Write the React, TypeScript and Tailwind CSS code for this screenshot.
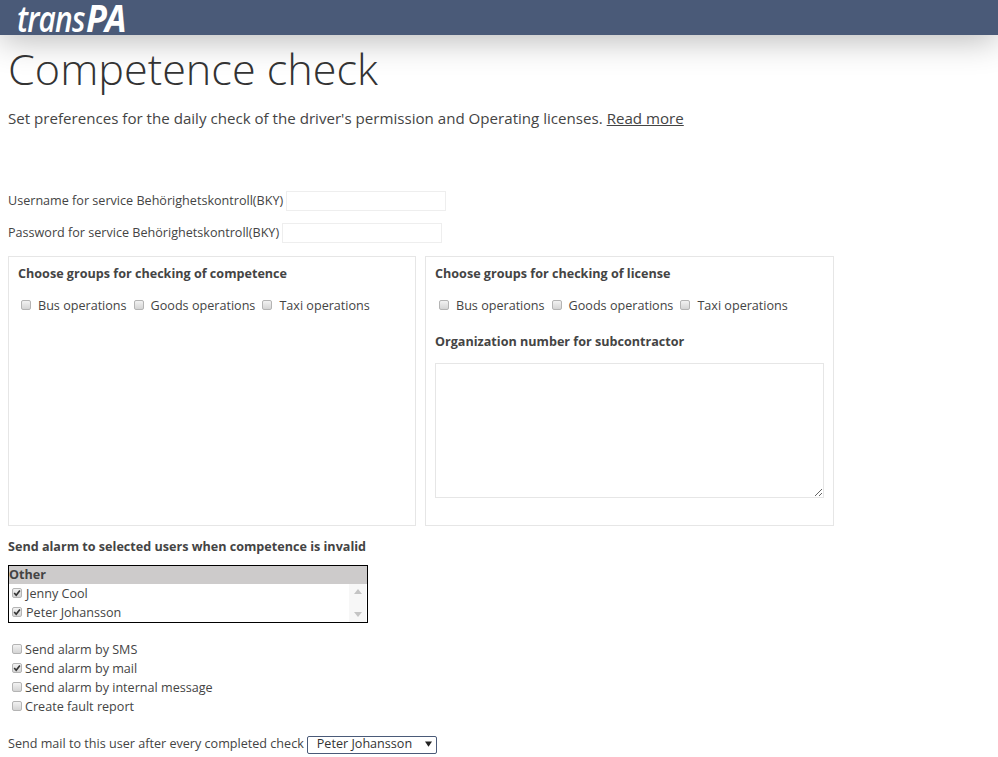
import React from 'react';

const Check = ({ checked = false }: { checked?: boolean }) => (
  <span className="relative inline-block w-[10px] h-[10px] shrink-0">
    <input
      type="checkbox"
      readOnly
      checked={checked}
      className="block appearance-none w-[10px] h-[10px] rounded-[2px] border border-[#b4b4b4] bg-gradient-to-b from-[#f2f2f2] to-[#d4d4d4]"
    />
    {checked && (
      <svg viewBox="0 0 10 10" className="absolute left-0 top-0 w-[10px] h-[10px]">
        <path d="M2.2 5 L4.2 7.2 L7.9 2.4" fill="none" stroke="#333" strokeWidth="1.7" />
      </svg>
    )}
  </span>
);

const GroupChecks = () => (
  <div className="flex items-center h-[18px] pl-[2px]">
    <span className="-mt-[3px] flex"><Check /></span>
    <span className="ml-[7px]">Bus operations</span>
    <span className="ml-[7px] -mt-[3px] flex"><Check /></span>
    <span className="ml-[7px]">Goods operations</span>
    <span className="ml-[7px] -mt-[3px] flex"><Check /></span>
    <span className="ml-[7px]">Taxi operations</span>
  </div>
);

const AlarmRow = ({ label, checked }: { label: string; checked?: boolean }) => (
  <div className="flex items-center h-[19px] pl-[4px] gap-[3px]">
    <span className="-mt-[3px] flex"><Check checked={checked} /></span>
    <span>{label}</span>
  </div>
);

export default function App() {
  return (
    <div className="h-[757px] overflow-hidden bg-white text-[#444] text-[12.6px] font-['Open_Sans',sans-serif]">
      {/* Header */}
      <header className="h-[35px] bg-[#4a5a78] shadow-[0_4px_34px_rgba(0,0,0,0.3)] pl-[17px] flex items-baseline text-white italic">
        <span className="text-[36px] font-semibold tracking-[-1px] leading-[35px] scale-x-[0.83] origin-left -mr-[14px]">trans</span>
        <span className="ml-[2px] text-[38px] font-bold tracking-[-2px] leading-[35px] scale-x-[0.9] origin-left">PA</span>
      </header>

      <div className="px-[8px]">
        <h1 className="text-[43.2px] font-light leading-[60px] mt-[4px] text-[#333]">Competence check</h1>
        <p className="text-[15.12px] leading-[20px] mt-[9px]">
          Set preferences for the daily check of the driver's permission and Operating licenses.{' '}
          <a className="underline">Read more</a>
        </p>

        <div className="flex items-center mt-[63px] h-[20px]">
          <label>Username for service Behörighetskontroll(BKY)</label>
          <input className="ml-[3px] w-[160px] h-[20px] border border-[#eeeeee]" />
        </div>
        <div className="flex items-center mt-[12px] h-[20px]">
          <label>Password for service Behörighetskontroll(BKY)</label>
          <input className="ml-[3px] w-[160px] h-[20px] border border-[#eeeeee]" />
        </div>

        <div className="flex gap-[9px] mt-[13px]">
          <section className="w-[408px] h-[270px] border border-[#e6e6e6] pl-[9px] pr-[9px] pt-[8px]">
            <h2 className="font-bold leading-[18px]">Choose groups for checking of competence</h2>
            <div className="mt-[14px] pl-[1px]"><GroupChecks /></div>
          </section>
          <section className="w-[409px] h-[270px] border border-[#e6e6e6] pl-[9px] pr-[9px] pt-[8px]">
            <h2 className="font-bold leading-[18px]">Choose groups for checking of license</h2>
            <div className="mt-[14px] pl-[2px]"><GroupChecks /></div>
            <h2 className="font-bold leading-[18px] mt-[18px]">Organization number for subcontractor</h2>
            <textarea className="block mt-[12px] w-[389px] h-[135px] border border-[#e6e6e6] resize-y" />
          </section>
        </div>

        <h2 className="font-bold leading-[18px] mt-[12px]">Send alarm to selected users when competence is invalid</h2>

        <div className="mt-[9px] w-[360px] h-[58px] border border-black">
          <div className="h-[18px] bg-[#cdcbcb] font-bold leading-[18px] text-[#444]">Other</div>
          <div className="flex h-[38px]">
            <div className="flex-1 pt-[1px]">
              <div className="flex items-center h-[19px] pl-[3px] gap-[4px]">
                <span className="-mt-[3px] flex"><Check checked /></span>
                <span>Jenny Cool</span>
              </div>
              <div className="flex items-center h-[19px] pl-[3px] gap-[4px]">
                <span className="-mt-[3px] flex"><Check checked /></span>
                <span>Peter Johansson</span>
              </div>
            </div>
            <div className="w-[17px] bg-[#f7f7f7] flex flex-col items-center justify-between py-[5px] mr-[1px]">
              <svg viewBox="0 0 8 5" className="w-[8px] h-[5px]"><path d="M4 0 L8 5 L0 5 Z" fill="#c4c4c4" /></svg>
              <svg viewBox="0 0 8 5" className="w-[8px] h-[5px]"><path d="M0 0 L8 0 L4 5 Z" fill="#c4c4c4" /></svg>
            </div>
          </div>
        </div>

        <div className="mt-[18px]">
          <AlarmRow label="Send alarm by SMS" />
          <AlarmRow label="Send alarm by mail" checked />
          <AlarmRow label="Send alarm by internal message" />
          <AlarmRow label="Create fault report" />
        </div>

        <div className="flex items-center mt-[18px] h-[19px]">
          <span>Send mail to this user after every completed check</span>
          <div className="ml-[3px] w-[130px] h-[18px] border border-[#4a5a78] rounded-[2px] flex items-center justify-between pl-[9px] pr-[4px] text-[#333]">
            <span>Peter Johansson</span>
            <svg viewBox="0 0 8 6" className="w-[7px] h-[6px] mb-[2px]"><path d="M0 0 L8 0 L4 6 Z" fill="#222" /></svg>
          </div>
        </div>
      </div>
    </div>
  );
}
